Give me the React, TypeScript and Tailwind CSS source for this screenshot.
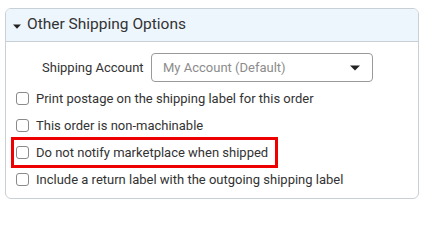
import React from "react";

const Check = ({ label, highlight }: { label: string; highlight?: boolean }) => (
  <div className="relative flex h-[27px] items-center pl-[10px]">
    <span className="box-border h-[13px] w-[13px] rounded-[3px] border border-[#8a8a8a] bg-white" />
    <span className="ml-[7px] text-[13px] leading-none text-[#333]">{label}</span>
    {highlight && (
      <div className="pointer-events-none absolute left-[5px] top-[-2px] h-[31px] w-[267px] border-[3px] border-[#ee0000]" />
    )}
  </div>
);

export default function App() {
  return (
    <div className="h-[208px] w-[427px] bg-white pl-[5px] pt-[8px]" style={{ fontFamily: "Roboto, 'Liberation Sans', sans-serif" }}>
      <div className="box-border h-[191px] w-[414px] overflow-hidden rounded-[6px] border border-[#c9d0d5] bg-white">
        <div className="flex h-[33px] items-center border-b border-[#c9d0d5] bg-[#eef6fd] pl-[7px]">
          <svg width="8" height="5" viewBox="0 0 8 5" className="mr-[6px] mt-[2px]">
            <path d="M0 0.5 L8 0.5 L4 4.8 Z" fill="#222" />
          </svg>
          <span className="whitespace-nowrap text-[15.5px] leading-none text-[#333]">Other Shipping Options</span>
        </div>
        <div className="flex flex-col pt-[11px]">
          <div className="flex h-[29px] items-center">
            <span className="ml-[36px] w-[100px] whitespace-nowrap text-[13px] leading-none text-[#333]">Shipping Account</span>
            <div className="ml-[9px] box-border flex h-[29px] w-[222px] items-center justify-between rounded-[4px] border border-[#9a9a9a] pl-[11px] pr-[12px]">
              <span className="text-[13px] leading-none text-[#8c8c8c]">My Account (Default)</span>
              <svg width="10" height="6" viewBox="0 0 10 6">
                <path d="M0 0.5 L10 0.5 L5 5.5 Z" fill="#222" />
              </svg>
            </div>
          </div>
          <div className="mt-[3px] flex flex-col">
            <Check label="Print postage on the shipping label for this order" />
            <Check label="This order is non-machinable" />
            <Check label="Do not notify marketplace when shipped" highlight />
            <Check label="Include a return label with the outgoing shipping label" />
          </div>
        </div>
      </div>
    </div>
  );
}
